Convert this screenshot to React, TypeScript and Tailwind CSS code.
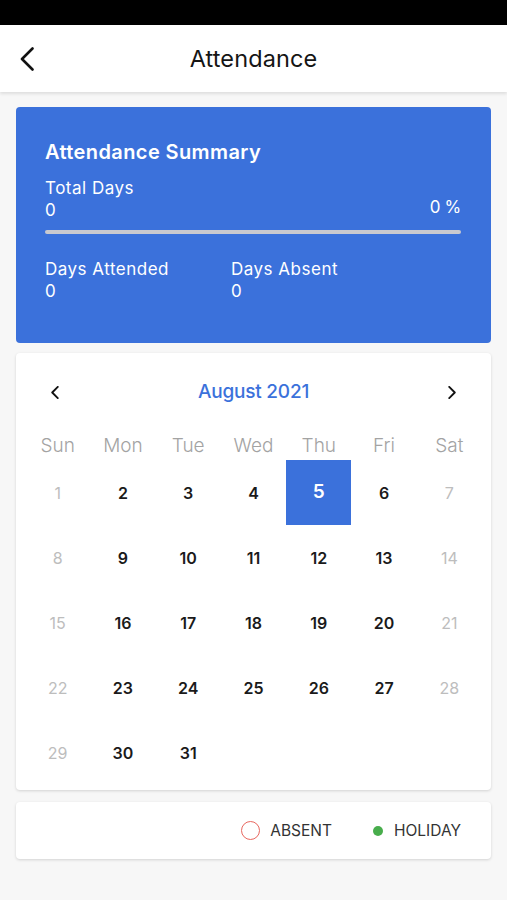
import React from "react";

const WEEKDAYS = ["Sun", "Mon", "Tue", "Wed", "Thu", "Fri", "Sat"];

// August 2021 starts on a Sunday, 31 days
const DAYS = Array.from({ length: 31 }, (_, i) => i + 1);
const SELECTED = 5;

function Chevron({ dir, className }: { dir: "left" | "right"; className?: string }) {
  return (
    <svg viewBox="0 0 8 14" className={className} fill="none" stroke="currentColor" strokeWidth={2} strokeLinecap="round" strokeLinejoin="round">
      {dir === "left" ? <path d="M7 1 1 7l6 6" /> : <path d="m1 1 6 6-6 6" />}
    </svg>
  );
}

export default function App() {
  return (
    <div className="min-h-[900px] bg-[#f7f7f7] font-['Inter',sans-serif]">
      {/* status bar */}
      <div className="h-[25px] bg-black" />

      {/* top bar */}
      <header className="relative flex h-[67px] items-center justify-center bg-white shadow-[0_2px_3px_rgba(0,0,0,0.1)]">
        <button type="button" className="absolute left-[20px] top-[22px] text-[#111]">
          <svg viewBox="0 0 14 24" className="h-[24px] w-[14px]" fill="none" stroke="currentColor" strokeWidth={2.6} strokeLinecap="round" strokeLinejoin="round">
            <path d="M12.5 1.5 2 12l10.5 10.5" />
          </svg>
        </button>
        <h1 className="text-[23.5px] font-normal leading-none tracking-[0.1px] text-[#151515]">Attendance</h1>
      </header>

      <main className="flex flex-col px-[16px] pt-[15px]">
        {/* summary */}
        <section className="rounded-[4px] bg-[#3b71db] pb-[41px] pl-[29px] pr-[30px] pt-[31px] text-white">
          <h2 className="text-[20px] font-semibold leading-[28px] tracking-[0.4px]">Attendance Summary</h2>
          <div className="mt-[11px] text-[17px] leading-[22px] tracking-[0.5px]">Total Days</div>
          <div className="flex items-start justify-between text-[17px] leading-[22px]">
            <span>0</span>
            <span className="-mt-[3px] tracking-[-0.3px]">0 %</span>
          </div>
          <div className="mt-[9px] h-[4px] rounded-full bg-[#c9c9cf]" />
          <div className="mt-[24px] flex text-[17px] leading-[22px] tracking-[0.5px]">
            <div className="w-[186px]">
              <div>Days Attended</div>
              <div>0</div>
            </div>
            <div>
              <div>Days Absent</div>
              <div>0</div>
            </div>
          </div>
        </section>

        {/* calendar */}
        <section className="mt-[10px] rounded-[4px] bg-white px-[9px] pb-[5px] pt-[25px] shadow-[0_1px_3px_rgba(0,0,0,0.15)]">
          <div className="grid grid-cols-7 items-center">
            <div className="flex justify-center pr-[6px] text-[#111]">
              <Chevron dir="left" className="h-[13px] w-[8px]" />
            </div>
            <div className="col-span-5 text-center text-[19px] font-medium leading-[28px] tracking-[-0.2px] text-[#3b71db]">
              August 2021
            </div>
            <div className="flex justify-center pl-[6px] text-[#111]">
              <Chevron dir="right" className="h-[13px] w-[8px]" />
            </div>
          </div>

          <div className="mt-[26px] grid grid-cols-7">
            {WEEKDAYS.map((d) => (
              <div key={d} className="text-center text-[19px] font-light leading-[28px] text-[#a3a3a3]">
                {d}
              </div>
            ))}
          </div>

          <div className="grid grid-cols-7">
            {DAYS.map((day, i) => {
              const col = i % 7;
              const weekend = col === 0 || col === 6;
              const selected = day === SELECTED;
              return (
                <div
                  key={day}
                  className={
                    selected
                      ? "flex h-[65px] items-center justify-center bg-[#3b71db] text-[19px] font-semibold text-white"
                      : weekend
                        ? "flex h-[65px] items-center justify-center text-[16px] text-[#bdbdbd]"
                        : "flex h-[65px] items-center justify-center text-[16px] font-semibold text-[#1a1a1a]"
                  }
                >
                  {day}
                </div>
              );
            })}
          </div>
        </section>

        {/* legend */}
        <section className="mt-[12px] flex h-[57px] items-center justify-end rounded-[4px] bg-white pr-[30px] shadow-[0_1px_3px_rgba(0,0,0,0.15)]">
          <span className="h-[19px] w-[19px] rounded-full border-[1.5px] border-[#e8675f]" />
          <span className="ml-[10px] text-[15.5px] leading-none text-[#333]">ABSENT</span>
          <span className="ml-[41px] h-[10px] w-[10px] rounded-full bg-[#48ad4c]" />
          <span className="ml-[11px] text-[15.5px] leading-none text-[#333]">HOLIDAY</span>
        </section>
      </main>
    </div>
  );
}
